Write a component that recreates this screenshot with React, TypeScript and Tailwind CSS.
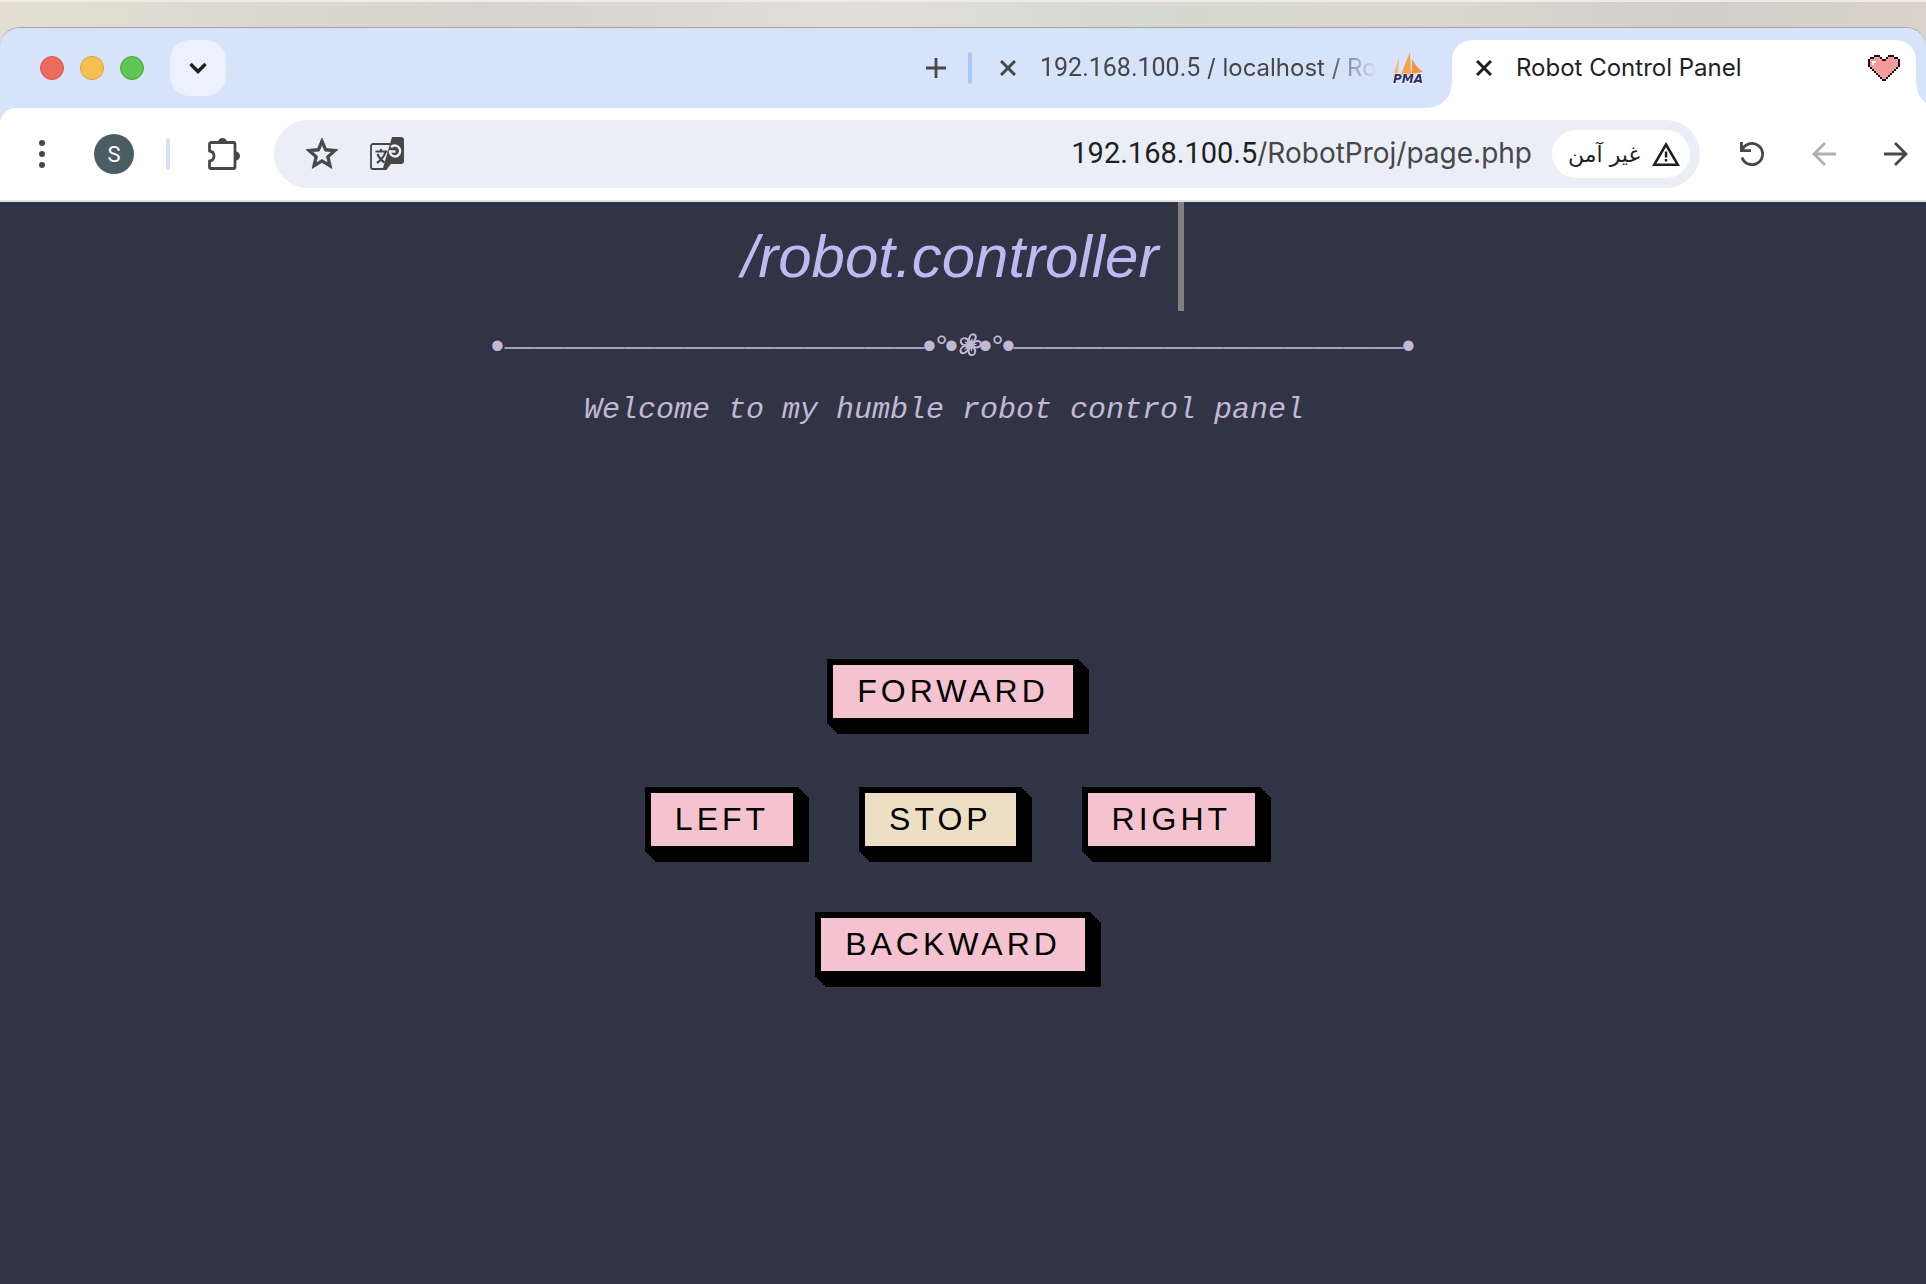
import React from "react";

const HEART = [
  "...kkk....kkk...",
  ".kkpppk..kpppkk.",
  "kppppppkkppppppk",
  "kpwwpppppppppppk",
  "kpwppppppppppppk",
  "kppppppppppppppk",
  ".kppppppppppppk.",
  "..kppppppppppk..",
  "...kppppppppk...",
  "....kppppppk....",
  ".....kppppk.....",
  "......kppk......",
  ".......kk.......",
];

const HEART_COLORS: Record<string, string> = { k: "#1a1414", p: "#f29c9c", w: "#ffffff" };

function HeartIcon() {
  return (
    <svg viewBox="0 0 16 13" className="h-[26px] w-8 shrink-0" shapeRendering="crispEdges" aria-hidden="true">
      {HEART.flatMap((row, y) =>
        row.split("").map((c, x) =>
          c === "." ? null : <rect key={`${x}-${y}`} x={x} y={y} width="1" height="1" fill={HEART_COLORS[c]} />,
        ),
      )}
    </svg>
  );
}

function SailIcon() {
  return (
    <svg viewBox="0 0 32 32" className="size-8 shrink-0 overflow-visible" role="img" aria-label="phpMyAdmin">
      <path d="M7 5C5 12 3 18 1 24l5-1z" fill="#f8b878" />
      <path d="M18 0C15 8 11 16 9 23l10-1z" fill="#f9a24a" />
      <path d="M20 7v15l11-2C27 17 23 13 20 7z" fill="#f7913a" />
      <text x="1" y="31" fontSize="12" fontWeight="700" fontStyle="italic" fontFamily="DejaVu Sans" fill="#2f2f5f" stroke="#fff" strokeWidth="1" paintOrder="stroke">
        PMA
      </text>
    </svg>
  );
}

function CloseIcon() {
  return (
    <svg viewBox="0 0 16 16" className="size-4" fill="none" stroke="currentColor" strokeWidth="3" aria-hidden="true">
      <path d="M1 1l14 14M15 1L1 15" />
    </svg>
  );
}

function TabStrip() {
  return (
    <div className="flex h-20 items-center bg-[#d7e2fb] pl-10">
      <div className="flex gap-4">
        <button aria-label="Close window" className="size-6 rounded-full border border-[#d9574c] bg-[#ed6a5e]" />
        <button aria-label="Minimize window" className="size-6 rounded-full border border-[#d9a23c] bg-[#f5bf4f]" />
        <button aria-label="Zoom window" className="size-6 rounded-full border border-[#4fa73e] bg-[#61c554]" />
      </div>
      <button aria-label="Search tabs" className="ml-[26px] flex size-14 items-center justify-center rounded-[20px] bg-[#ebf2fd] text-[#1f1f1f]">
        <svg viewBox="0 0 18 12" className="h-3 w-[18px]" fill="none" stroke="currentColor" strokeWidth="3.4" aria-hidden="true">
          <path d="M1.5 2L9 9.5 16.5 2" />
        </svg>
      </button>
      <div className="flex-1" />
      <button aria-label="New tab" className="text-[#474747]">
        <svg viewBox="0 0 20 20" className="size-5" fill="none" stroke="currentColor" strokeWidth="2.8" aria-hidden="true">
          <path d="M10 0v20M0 10h20" />
        </svg>
      </button>
      <div className="ml-[22px] h-8 w-1 rounded-full bg-[#a8c7fa]" />
      <div className="ml-7 flex w-[452px] items-center text-[#474747]">
        <button aria-label="Close tab">
          <CloseIcon />
        </button>
        <a href="#pma" className="ml-6 w-[336px] text-2xl whitespace-nowrap [mask-image:linear-gradient(to_right,black_85%,transparent)]">
          <span className="font-[Roboto] text-[25px]">192.168.100.5</span> / localhost / Ro
        </a>
        <div className="ml-4">
          <SailIcon />
        </div>
      </div>
      <div className="relative flex h-20 w-[464px] items-end">
        <div className="absolute bottom-0 -left-6 size-6 bg-[radial-gradient(circle_at_0_0,transparent_23px,white_24px)]" />
        <div className="flex h-[68px] w-full items-center rounded-t-[20px] bg-white pr-4 pb-3 pl-6 text-[#1f1f1f]">
          <button aria-label="Close tab">
            <CloseIcon />
          </button>
          <a href="#panel" className="ml-6 flex-1 text-2xl whitespace-nowrap">
            Robot Control Panel
          </a>
          <HeartIcon />
        </div>
      </div>
      <div className="h-20 w-[10px] bg-[radial-gradient(circle_at_24px_56px,transparent_23px,white_24px)] [clip-path:inset(56px_0_0_0)]" />
    </div>
  );
}

function TranslateIcon() {
  return (
    <svg viewBox="0 0 34 34" className="size-[34px]" fill="none" stroke="#474747" aria-hidden="true">
      <path d="M20 7H3a2 2 0 0 0-2 2v21a2 2 0 0 0 2 2h13l3-8" strokeWidth="1.8" />
      <path d="M5.500 14.500h12M11 12v2.500M15.500 15c-1.500 5-5 8.500-8.500 11M7.500 17c1.500 4 4 6.500 7 8.500" strokeWidth="2.200" />
      <path d="M22 0h9a3 3 0 0 1 3 3v21a3 3 0 0 1-3 3H21l-4 5-4-1z" fill="#474747" stroke="none" />
      <path d="M25.500 14.500H20c0 3 2.500 5 5.500 5a5.500 5.500 0 1 0-4.500-9.500" stroke="#ebeef6" strokeWidth="2.400" />
    </svg>
  );
}

function Toolbar() {
  return (
    <div className="bg-[#d7e2fb]">
      <div className="flex h-[92px] items-center rounded-tl-2xl bg-white pr-[18px] pl-[39px] text-[#474747]">
        <button aria-label="Menu" className="flex flex-col gap-[5px]">
          <span className="size-1.5 rounded-full bg-current" />
          <span className="size-1.5 rounded-full bg-current" />
          <span className="size-1.5 rounded-full bg-current" />
        </button>
        <button aria-label="Profile" className="ml-[49px] flex size-10 items-center justify-center rounded-full bg-[#4a5c64] font-[Roboto] text-[22px] text-white">
          S
        </button>
        <div className="ml-8 h-8 w-1 rounded-full bg-[#d3e3fd]" />
        <button aria-label="Extensions" className="ml-[38px]">
          <svg viewBox="0 0 32 32" className="size-8" fill="none" aria-hidden="true">
            <path d="M3.500 4.500H25.500a1.500 1.500 0 0 1 1.500 1.500V29a1.500 1.500 0 0 1-1.500 1.500H3a1.500 1.500 0 0 1-1.500-1.500V23C7.500 22 7.500 14 1.500 13V6a1.500 1.500 0 0 1 1.500-1.500z" stroke="currentColor" strokeWidth="2.800" strokeLinejoin="round" />
            <path d="M10 4a4.500 4 0 0 1 9 0zM27.500 13.500a4.500 4.500 0 0 1 0 9z" fill="currentColor" />
          </svg>
        </button>
        <div className="ml-[34px] flex h-[68px] flex-1 items-center rounded-full bg-[#ebeef6] pr-[10px] pl-8">
          <button aria-label="Bookmark">
            <svg viewBox="2 2 20 20" className="size-8 overflow-visible" fill="currentColor" stroke="currentColor" strokeWidth="0.500" aria-hidden="true">
              <path d="M22 9.240l-7.190-.62L12 2 9.190 8.630 2 9.240l5.460 4.730L5.820 21 12 17.270 18.180 21l-1.630-7.030L22 9.240zM12 15.400l-3.760 2.270 1-4.280-3.320-2.880 4.380-.38L12 6.100l1.710 4.040 4.380.38-3.320 2.880 1 4.280L12 15.400z" />
            </svg>
          </button>
          <button aria-label="Translate" className="ml-8">
            <TranslateIcon />
          </button>
          <div className="flex-1" />
          <div className="text-[28px] whitespace-nowrap">
            <span className="font-[Roboto] text-[29px] text-[#1f1f1f]">192.168.100.5</span>/RobotProj/page.php
          </div>
          <button className="ml-5 flex h-12 w-[138px] items-center justify-between rounded-full bg-white pr-[10px] pl-4 text-[#1f1f1f]">
            <span dir="rtl" lang="fa" className="font-['DejaVu_Sans'] text-[22px] whitespace-nowrap">
              غیر آمن
            </span>
            <svg viewBox="0 0 28 24" className="h-6 w-7" aria-hidden="true">
              <path d="M14 2.500L25.800 22.700H2.200z" fill="none" stroke="currentColor" strokeWidth="2.600" />
              <path d="M12.800 9.500h2.500v6h-2.500zM12.800 17h2.500v2.500h-2.500z" fill="currentColor" />
            </svg>
          </button>
        </div>
        <button aria-label="Reload" className="ml-10">
          <svg viewBox="0 0 24 24" className="size-6" fill="none" stroke="currentColor" strokeWidth="2.800" aria-hidden="true">
            <path d="M1.400 0v8.600H11M2 8.600A10.600 10.600 0 1 1 2 15.500" />
          </svg>
        </button>
        <button aria-label="Forward" disabled className="ml-12 text-[#b0b0b0]">
          <svg viewBox="0 0 24 24" className="size-6" fill="none" stroke="currentColor" strokeWidth="2.800" aria-hidden="true">
            <path d="M24 12H2M13 1L2 12l11 11" />
          </svg>
        </button>
        <button aria-label="Back" className="ml-12">
          <svg viewBox="0 0 24 24" className="size-6" fill="none" stroke="currentColor" strokeWidth="2.800" aria-hidden="true">
            <path d="M0 12h22M11 1l11 11-11 11" />
          </svg>
        </button>
      </div>
    </div>
  );
}

function Bullet() {
  return <span className="flex w-[10px] justify-center text-[38px] not-italic">•</span>;
}

function Flower() {
  return (
    <svg viewBox="-12 -12 24 24" className="size-6 overflow-visible" fill="none" stroke="currentColor" role="img" aria-label="❀">
      {[12, 84, 156, 228, 300].map((angle) => (
        <g key={angle} transform={`translate(1 -1) skewX(-8) rotate(${angle})`}>
          <ellipse cx="0" cy="-7" rx="3.200" ry="3.800" strokeWidth="2" />
          <path d="M0 0v-6.500" strokeWidth="1.200" />
        </g>
      ))}
      <circle cx="1" cy="-1" r="4" fill="currentColor" stroke="none" />
    </svg>
  );
}

function Divider() {
  return (
    <div className="mt-[17px] flex items-center text-[30px] leading-9 whitespace-nowrap text-[#c1b8d6] italic">
      <Bullet />
      <span className="ml-0.5 w-[420px] text-[#a8a1bd]">——————————————</span>
      <Bullet />
      <span className="w-3">°</span>
      <Bullet />
      <Flower />
      <Bullet />
      <span className="w-[13px]">°</span>
      <Bullet />
      <span className="w-[390px] text-[#a8a1bd]">—————————————</span>
      <Bullet />
    </div>
  );
}

function ControlButton({ label, stop = false }: { label: string; stop?: boolean }) {
  return (
    <button
      className={`border-[6px] border-black px-6 py-2 text-[32px] leading-[37px] tracking-[4px] text-black shadow-[2px_2px_0_#000,4px_4px_0_#000,6px_6px_0_#000,8px_8px_0_#000,10px_10px_0_#000] ${stop ? "bg-[#ecdfc3]" : "bg-[#f5c2cf]"}`}
    >
      {label}
    </button>
  );
}

export default function App() {
  return (
    <div className="flex min-h-screen flex-col overflow-hidden bg-[#313445] font-[Inter,sans-serif]">
      <header className="bg-[linear-gradient(to_right,#e2dfd2,#d6d4cc_25%,#e0dfd8_45%,#d6d9cf_60%,#dbd8ce_75%,#cfcec8_88%,#d9d4c9)]">
        <div className="h-[27px] border-t-2 border-[#efece6]" />
        <div className="overflow-hidden rounded-t-[20px] border-t border-[#a5a5a0]">
          <TabStrip />
        </div>
        <Toolbar />
        <div className="h-0.5 bg-[#e0e4e1]" />
      </header>
      <main className="flex flex-1 flex-col items-center bg-[#313445] pr-5 font-['Liberation_Sans',Arial,sans-serif]">
        <h1 className="border-r-[6px] border-[#808080] px-[3px] text-[60px] leading-[109px] whitespace-pre text-[#babbf1] italic">
          {" /robot.controller "}
        </h1>
        <Divider />
        <p className="mt-7 font-['Liberation_Mono','Courier_New',monospace] text-[30px] leading-9 whitespace-pre text-[#c1b8d6] italic">
          {"Welcome to my humble robot control panel "}
        </p>
        <div className="mt-[231px] flex flex-col items-center gap-[60px]">
          <ControlButton label="FORWARD" />
          <div className="flex gap-[60px] pt-[3px]">
            <ControlButton label="LEFT" />
            <ControlButton label="STOP" stop />
            <ControlButton label="RIGHT" />
          </div>
          <ControlButton label="BACKWARD" />
        </div>
      </main>
    </div>
  );
}
